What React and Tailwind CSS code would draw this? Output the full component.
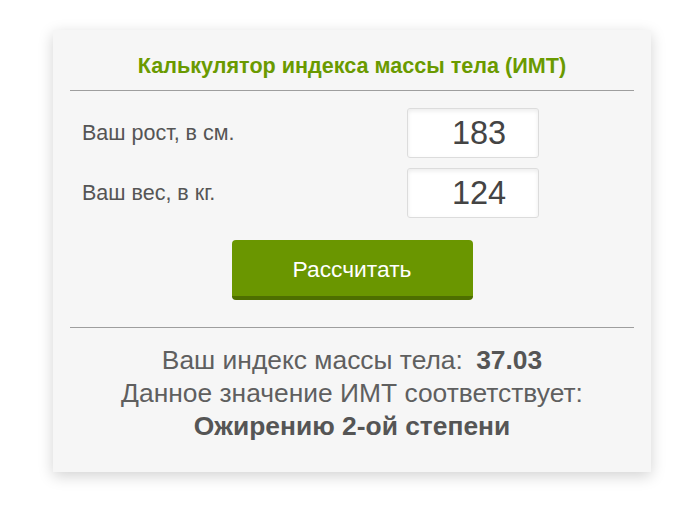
import React from 'react';

const Row = ({ label, value }) => (
  <div className="flex items-center h-[50px]">
    <label className="w-[337px] pl-[12px] text-[21.5px] text-[#555]">{label}</label>
    <input
      type="text"
      defaultValue={value}
      className="w-[132px] h-[50px] rounded-[3px] border border-[#dcdcdc] bg-white pl-3 text-center text-[32.5px] text-[#444] shadow-[inset_0_2px_4px_rgba(0,0,0,0.08)] outline-none"
    />
  </div>
);

export default function App() {
  return (
    <div
      className="w-[700px] h-[528px] bg-white pt-[30px]"
      style={{ fontFamily: '"Liberation Sans", Arial, sans-serif' }}
    >
      <div className="ml-[53px] w-[598px] h-[442px] bg-[#f6f6f6] px-[17px] pt-[22px] shadow-[0_4px_14px_rgba(0,0,0,0.18)]">
        {/* Header */}
        <h1 className="text-center text-[21.6px] leading-[28px] font-bold text-[#6a9a00]">
          Калькулятор индекса массы тела (ИМТ)
        </h1>
        <div className="mt-[10px] h-px bg-[#9e9e9e]" />

        {/* Inputs */}
        <div className="mt-[17px] flex flex-col gap-[10px]">
          <Row label="Ваш рост, в см." value="183" />
          <Row label="Ваш вес, в кг." value="124" />
        </div>

        <div className="mt-[22px] flex justify-center">
          <button className="w-[241px] h-[60px] rounded-[4px] bg-[#6a9600] border-b-4 border-[#4e6f00] pt-[3px] text-[22.8px] text-white">
            Рассчитать
          </button>
        </div>

        <div className="mt-[27px] h-px bg-[#9e9e9e]" />

        {/* Result */}
        <div className="mt-[16px] text-center text-[26.4px] leading-[33px] text-[#5f5f5f]">
          <div>
            Ваш индекс массы тела: <b className="ml-[6px] text-[#555]">37.03</b>
          </div>
          <div>Данное значение ИМТ соответствует:</div>
          <div className="font-bold text-[#555]">Ожирению 2-ой степени</div>
        </div>
      </div>
    </div>
  );
}
